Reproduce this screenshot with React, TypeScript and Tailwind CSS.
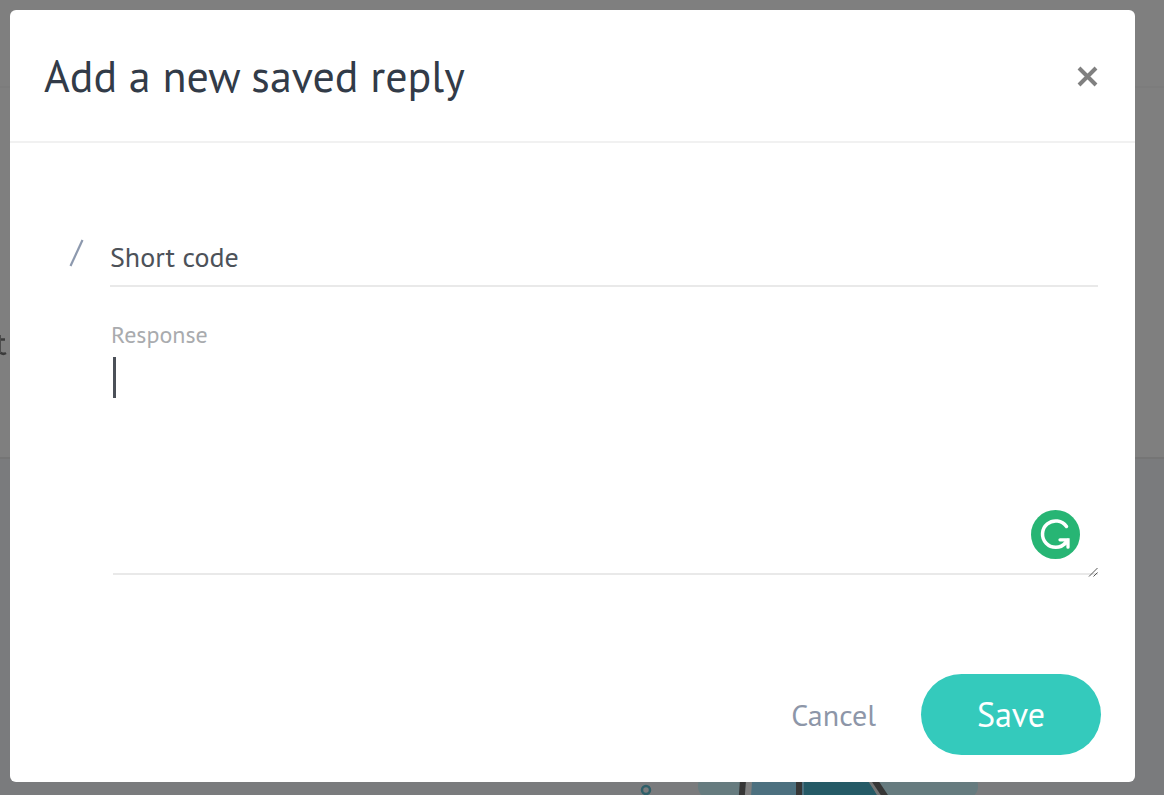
import React, { useState } from 'react'

const PageBehind = () => {
  return (
    <div aria-hidden="true" className="absolute inset-0 flex flex-col overflow-hidden bg-[#f5f6fa]">
      <div className="h-[88px] shrink-0 border-b-2 border-[#f8f8f8] bg-white" />
      <div className="flex h-[371px] shrink-0 items-end border-b-2 border-[#eaeaea] bg-white">
        <svg className="mb-[98px]" width="10" height="24" viewBox="0 0 10 24" fill="none">
          <path d="M0 4.500H5M0 17.500Q3 20 6 18" stroke="#777" strokeWidth="2.500" />
          <path d="M0 0V18" stroke="#999" strokeWidth="2" />
        </svg>
      </div>
      <svg
        className="absolute top-[780px] left-[636px]"
        width="344"
        height="40"
        viewBox="0 0 344 40"
        fill="none"
      >
        <rect x="62" y="-6" width="280" height="24" rx="11" fill="#ccf6ff" />
        <path d="M116 0H168V40H114Z" fill="#98e0ff" />
        <path d="M168 0H233L254 40H168Z" fill="#4ab4cc" />
        <path d="M113 0L110 40" stroke="#fff" strokeWidth="6" />
        <path d="M107 0L104 40" stroke="#6c6c6c" strokeWidth="6" />
        <path d="M163 0V40" stroke="#6c6c6c" strokeWidth="6" />
        <path d="M233 -2L257 34" stroke="#e8e8e8" strokeWidth="5" />
        <path d="M237 -2L261 34" stroke="#6c6c6c" strokeWidth="6" />
        <circle cx="10" cy="10" r="4" stroke="#5ebed2" strokeWidth="2.500" />
      </svg>
      <div className="absolute inset-0 bg-black/50" />
    </div>
  )
}

const GrammarBadge = () => {
  return (
    <button type="button" aria-label="Check grammar" className="absolute right-[18px] bottom-4">
      <svg className="block" width="49" height="49" viewBox="0 0 49 49" fill="none">
        <circle cx="24.500" cy="24.500" r="24.500" fill="#27b574" />
        <path
          d="M35.500 16.500A13.200 13.200 0 1 0 34.500 33"
          stroke="#fff"
          strokeWidth="3.500"
          strokeLinecap="round"
        />
        <path
          d="M29 29.800H37V37.200M37 29.800L33.500 34"
          stroke="#fff"
          strokeWidth="3.300"
          strokeLinecap="round"
          strokeLinejoin="miter"
        />
      </svg>
    </button>
  )
}

export default function App() {
  const [code, setCode] = useState('')
  const [response, setResponse] = useState('')

  return (
    <div className="relative min-h-screen pt-[10px] pr-[29px] pb-[13px] pl-[10px] font-['PT_Sans','Noto_Sans',sans-serif]">
      <PageBehind />
      <form
        role="dialog"
        aria-labelledby="dialog-title"
        className="relative rounded-md bg-white"
        onSubmit={(e) => e.preventDefault()}
      >
        <header className="flex items-center justify-between border-b-2 border-[#f1f1f1] py-10 pr-[37px] pl-[34px]">
          <h1 id="dialog-title" className="text-[44px] leading-[51px] text-[#323b48]">
            Add a new saved reply
          </h1>
          <button type="button" aria-label="Close">
            <svg className="block" width="21" height="22" viewBox="0 0 21 22" fill="none">
              <path d="M2 3L19 20M19 3L2 20" stroke="#808080" strokeWidth="4" />
            </svg>
          </button>
        </header>

        <div className="pt-20 pr-[37px] pl-[59px]">
          <div className="flex">
            <svg className="mt-4 mr-[26px]" width="15" height="28" viewBox="0 0 15 28" fill="none">
              <path d="M1.500 27L13.500 1" stroke="#8d99ae" strokeWidth="2.200" />
            </svg>
            <div className="relative flex-1">
              <label
                htmlFor="short-code"
                className="pointer-events-none absolute top-4 left-0 text-[28px] leading-9 text-[#4d5259]"
              >
                {code ? '' : 'Short code'}
              </label>
              <input
                id="short-code"
                aria-label="Short code"
                value={code}
                onChange={(e) => setCode(e.target.value)}
                className="block h-16 w-full border-b-2 border-[#e9e9e9] bg-transparent text-[28px] text-[#4d5259] outline-none"
              />
            </div>
          </div>

          <div className="mt-8 pl-[42px]">
            <label htmlFor="response" className="block text-[24px] leading-8 text-[#a9abae]">
              Response
            </label>
            <div className="relative mt-1 ml-0.5">
              <textarea
                id="response"
                value={response}
                onChange={(e) => setResponse(e.target.value)}
                className="block h-[220px] w-full resize-none border-b-2 border-[#e9e9e9] bg-transparent text-[28px] text-[#4d5259] caret-transparent outline-none"
              />
              <span className="absolute top-0.5 left-0 h-[41px] w-[3px] bg-[#4b5058]" />
              <GrammarBadge />
              <svg
                className="absolute right-0 -bottom-0.5"
                width="10"
                height="10"
                viewBox="0 0 10 10"
                fill="none"
              >
                <path d="M1 9.500L9.500 1M5.500 9.500L9.500 5.500" stroke="#555" strokeWidth="1" />
              </svg>
            </div>
          </div>
        </div>

        <footer className="flex items-center justify-end gap-[45px] pt-[99px] pr-[34px] pb-[27px]">
          <button type="button" className="text-[30px] leading-10 text-[#8d96a8]">
            Cancel
          </button>
          <button
            type="submit"
            className="h-[81px] w-[180px] rounded-full bg-[#34cabc] text-[34px] font-medium text-white"
          >
            Save
          </button>
        </footer>
      </form>
    </div>
  )
}
